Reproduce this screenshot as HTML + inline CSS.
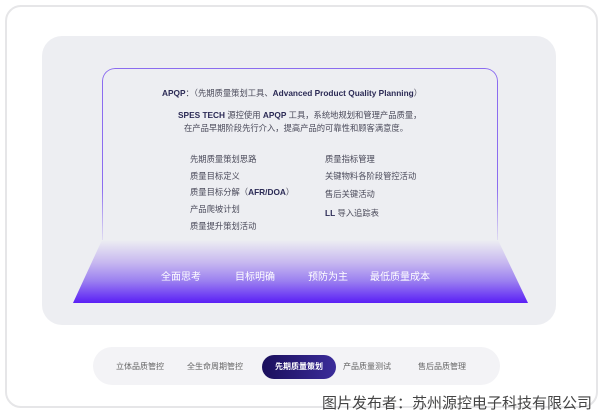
<!DOCTYPE html>
<html><head><meta charset="utf-8"><style>
*{margin:0;padding:0;box-sizing:border-box}
body{width:600px;height:416px;background:#fff;position:relative;overflow:hidden;font-family:"Liberation Sans","Noto Sans CJK SC",sans-serif}
.card{position:absolute;left:5px;top:5px;width:593px;height:403px;border:2px solid #e6e6e8;border-radius:16px;background:#fff}
.panel{position:absolute;left:42px;top:36px;width:514px;height:289px;background:#edeef2;border-radius:20px}
.box{position:absolute;left:102px;top:68px;width:396px;height:200px;border:1.5px solid #8b6cf0;border-bottom:none;border-radius:13px 13px 0 0;-webkit-mask:linear-gradient(#000 60%,transparent 90%);mask:linear-gradient(#000 60%,transparent 90%)}
.trap{position:absolute;left:73px;top:240px;width:455px;height:63px;clip-path:polygon(29px 0,425px 0,100% 100%,0 100%);background:linear-gradient(rgba(237,238,242,1) 0%,rgba(200,185,240,1) 35%,#9b80f0 65%,#5a1ff5 100%)}
.t{position:absolute;font-size:8.3px;color:#4a4a5a;white-space:nowrap}
.d{color:#2b2a55;font-weight:bold}
.w{position:absolute;top:268px;color:#fff;font-size:10px}
.tabs{position:absolute;left:93px;top:347px;width:407px;height:38px;background:#f3f3f6;border-radius:19px}
.tab{position:absolute;top:361px;font-size:8px;color:#666}
.act{position:absolute;left:262px;top:355px;width:74px;height:24px;border-radius:12px;background:linear-gradient(90deg,#1a0f5c,#3b2c9a);color:#fff;font-size:8px;font-weight:bold;text-align:center;line-height:24px}
.cred{position:absolute;left:322px;top:392px;font-size:15px;color:#444;white-space:nowrap}
</style></head><body>
<div class="card"></div>
<div class="panel"></div>
<div class="box"></div>
<div class="trap"></div>
<div class="t" style="left:162px;top:87px"><span class="d">APQP</span>：（先期质量策划工具、<span class="d">Advanced Product Quality Planning</span>）</div>
<div class="t" style="left:178px;top:109px"><span class="d">SPES TECH</span> 源控使用 <span class="d">APQP</span> 工具，系统地规划和管理产品质量，</div>
<div class="t" style="left:184px;top:122px">在产品早期阶段先行介入，提高产品的可靠性和顾客满意度。</div>
<div class="t" style="left:190px;top:153px">先期质量策划思路</div>
<div class="t" style="left:190px;top:170px">质量目标定义</div>
<div class="t" style="left:190px;top:186px">质量目标分解（<span class="d">AFR/DOA</span>）</div>
<div class="t" style="left:190px;top:203px">产品爬坡计划</div>
<div class="t" style="left:190px;top:220px">质量提升策划活动</div>
<div class="t" style="left:325px;top:153px">质量指标管理</div>
<div class="t" style="left:325px;top:170px">关键物料各阶段管控活动</div>
<div class="t" style="left:325px;top:188px">售后关键活动</div>
<div class="t" style="left:325px;top:207px"><span class="d">LL</span> 导入追踪表</div>
<div class="w" style="left:161px">全面思考</div>
<div class="w" style="left:235px">目标明确</div>
<div class="w" style="left:308px">预防为主</div>
<div class="w" style="left:370px">最低质量成本</div>
<div class="tabs"></div>
<div class="tab" style="left:116px">立体品质管控</div>
<div class="tab" style="left:187px">全生命周期管控</div>
<div class="act">先期质量策划</div>
<div class="tab" style="left:343px">产品质量测试</div>
<div class="tab" style="left:418px">售后品质管理</div>
<div class="cred">图片发布者：苏州源控电子科技有限公司</div>
</body></html>
